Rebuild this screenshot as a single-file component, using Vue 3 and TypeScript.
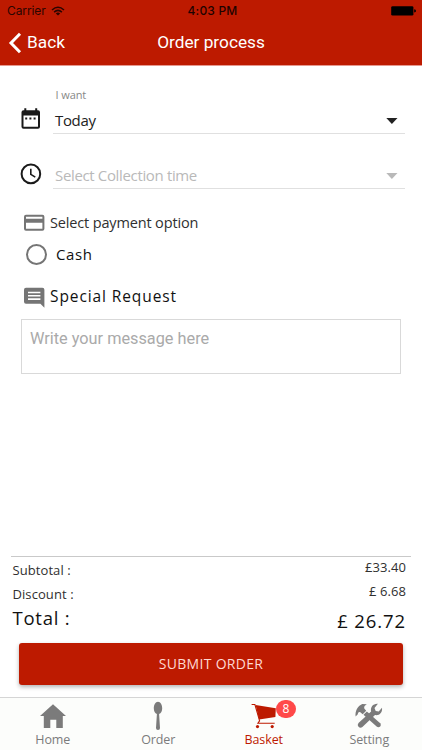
<script setup lang="ts">
import { ref } from 'vue'

interface Tab {
  id: string
  label: string
  badge?: number
}

interface Amount {
  id: string
  label: string
  value: string
}

const tabs: Tab[] = [
  { id: 'home', label: 'Home' },
  { id: 'order', label: 'Order' },
  { id: 'basket', label: 'Basket', badge: 8 },
  { id: 'setting', label: 'Setting' },
]

const amounts: Amount[] = [
  { id: 'subtotal', label: 'Subtotal :', value: '£33.40' },
  { id: 'discount', label: 'Discount :', value: '£ 6.68' },
  { id: 'total', label: 'Total :', value: '£ 26.72' },
]

const activeTab = ref('basket')
const cash = ref(false)
const message = ref('')
</script>

<template>
  <div class="screen">
    <header class="header">
      <div class="status">
        <div class="carrier">
          <span>Carrier</span>
          <svg class="wifi" width="14" height="10" viewBox="0 0 14 10">
            <g fill="none" stroke="#2b0500" stroke-width="1.5">
              <path d="M1 4Q7-1.4 13 4" />
              <path d="M3.1 6.1Q7 2.6 10.9 6.1" />
            </g>
            <path d="M4.8 7.4Q7 5.6 9.2 7.4L7 9.6z" fill="#2b0500" />
          </svg>
        </div>
        <span class="clock">4:03 PM</span>
        <svg class="battery" width="26" height="10" viewBox="0 0 26 10">
          <rect x="0.2" y="0.2" width="22.2" height="9.4" rx="1.4" />
          <path d="M23.2 3.2Q25 3.5 25 4.9T23.2 6.6z" />
        </svg>
      </div>
      <div class="navbar">
        <button class="back" type="button">
          <svg width="14" height="22" viewBox="0 0 14 22">
            <path d="M12 1.8L3 11l9 9.2" fill="none" stroke="#fff" stroke-width="3" />
          </svg>
          <span>Back</span>
        </button>
        <h1 class="title">Order process</h1>
      </div>
    </header>

    <main class="content">
      <section class="field">
        <svg class="field-icon" width="22" height="24" viewBox="0 0 22 24">
          <path
            fill="#1a1a1a"
            fill-rule="evenodd"
            d="M4.3 1.2h2v2h8.900v-2h2v2h.8q2 0 2 2v14.600q0 2-2 2H3.500q-2 0-2-2V5.200q0-2 2-2h.8zM3.500 8.500v11.300h14.500V8.500z"
          />
          <path fill="#1a1a1a" d="M5.200 10.500h2v2h-2zM9.400 10.500h2v2h-2zM13.600 10.500h2v2h-2z" />
        </svg>
        <div class="field-body">
          <span class="caption">I want</span>
          <div class="select">
            <span>Today</span>
            <svg class="caret" width="12" height="6" viewBox="0 0 12 6"><path d="M.3 0h11.200L5.900 6z" fill="currentColor" /></svg>
          </div>
        </div>
      </section>

      <section class="field second">
        <svg class="field-icon" width="22" height="24" viewBox="0 0 22 24">
          <circle cx="10.900" cy="11.900" r="9.300" fill="none" stroke="#1a1a1a" stroke-width="2" />
          <path d="M10.800 6.800v5.600l4.500 2.700" fill="none" stroke="#1a1a1a" stroke-width="1.600" />
        </svg>
        <div class="field-body">
          <div class="select empty">
            <span>Select Collection time</span>
            <svg class="caret" width="12" height="6" viewBox="0 0 12 6"><path d="M.3 0h11.200L5.900 6z" fill="currentColor" /></svg>
          </div>
        </div>
      </section>

      <h2 class="heading payment">
        <svg width="21" height="18" viewBox="0 0 21 18">
          <path
            fill="#757575"
            fill-rule="evenodd"
            d="M2 .7h16.400q2 0 2 2v12q0 2-2 2H2q-2 0-2-2v-12q0-2 2-2zM2 2.700v2h16.400v-2zM2 8.700v6h16.400v-6z"
          />
        </svg>
        <span>Select payment option</span>
      </h2>

      <label class="option">
        <input v-model="cash" class="native" type="checkbox" />
        <span class="radio" :class="{ checked: cash }"></span>
        <span>Cash</span>
      </label>

      <h2 class="heading request">
        <svg width="21" height="21" viewBox="0 0 21 21">
          <path
            fill="#757575"
            fill-rule="evenodd"
            d="M2 .7h16.400q2 0 2 2v18l-4-4H2q-2 0-2-2v-12q0-2 2-2zM4 4.700v1.600h12.400V4.700zM4 8v1.600h12.400V8zM4 11.200v1.700h12.400v-1.700z"
          />
        </svg>
        <span>Special Request</span>
      </h2>

      <textarea v-model="message" class="message" placeholder="Write your message here"></textarea>
    </main>

    <section class="summary">
      <div v-for="row in amounts" :key="row.id" class="amount" :class="row.id">
        <span class="amount-label">{{ row.label }}</span>
        <span class="amount-value">{{ row.value }}</span>
      </div>
    </section>

    <button class="submit" type="button"><span>SUBMIT ORDER</span></button>

    <nav class="tabs">
      <button
        v-for="tab in tabs"
        :key="tab.id"
        class="tab"
        :class="{ active: tab.id === activeTab }"
        type="button"
        @click="activeTab = tab.id"
      >
        <svg width="30" height="30" viewBox="0 0 30 30" fill="currentColor">
          <path v-if="tab.id === 'home'" d="M15 6.300L28 18h-3.200v12h-6.500v-8.200h-6V30H5.800V18H2z" />
          <template v-else-if="tab.id === 'order'">
            <path d="M15 3.800c2.600 0 4.200 3.200 4.200 6.400 0 2.900-1.200 5.100-3.100 5.800l.9 13.900q0 2-2 2t-2-2l.9-13.900c-1.900-.7-3.100-2.900-3.100-5.800 0-3.200 1.600-6.400 4.200-6.400z" />
          </template>
          <template v-else-if="tab.id === 'basket'">
            <path d="M6.600 7l20.200 3.200-.4 8.900L10.100 21.400z" />
            <path d="M2.600 6.500h3.300l4.700 16.400-1.700 2.400h16.800" fill="none" stroke="currentColor" stroke-width="1.100" />
            <circle cx="8.500" cy="28.600" r="1.600" />
            <circle cx="23.200" cy="28.600" r="1.600" />
          </template>
          <template v-else>
            <path d="M1.600 18.600C1 13.200 3.400 8.200 8.300 6.100l4.500.2c-2 1.200-3 2.400-2.500 4.100l1.900 2.400-3.500 3.500-2.400-2.100c-1.500-.4-2.300.3-2.500 2z" />
            <path d="M9.500 16.800l3.400-3.400L26.200 25.200q1.400 1.700 0 3.300-1.800 1.600-3.600 0z" />
            <path d="M23.900 5.800l-3.400 4.200 1.200 2.900 3 .7 3.300-3.900c.7 4.500-2.500 8.200-7 7.400L8.400 29q-2 1.600-3.900-.2-1.600-1.900 0-3.800l12.600-11.400c-1-4.500 2.200-8.300 6.800-7.800z" />
          </template>
        </svg>
        <span class="tab-label">{{ tab.label }}</span>
        <span v-if="tab.badge" class="badge">{{ tab.badge }}</span>
      </button>
    </nav>
  </div>
</template>

<style>
body {
  background: #fff;
}
</style>

<style scoped>
.screen,
.screen * {
  box-sizing: border-box;
}

.screen {
  display: flex;
  flex-direction: column;
  width: 422px;
  height: 750px;
  overflow: hidden;
  background: #fff;
  color: #303030;
  font-family: 'Open Sans', 'Noto Sans', sans-serif;
  white-space: nowrap;
}

button {
  margin: 0;
  padding: 0;
  border: 0;
  background: none;
  font: inherit;
  color: inherit;
}

svg {
  display: block;
  flex: none;
}

.header {
  height: 66px;
  flex: none;
  border-bottom: 1px solid #e6988e;
  background: #bd1a00;
}

.status {
  display: grid;
  grid-template-columns: 1fr auto 1fr;
  align-items: center;
  height: 22px;
  padding: 0 5px 0 7px;
  color: #2b0500;
  font: 12px/22px Inter, sans-serif;
}

.carrier {
  display: flex;
  align-items: center;
  gap: 5px;
  letter-spacing: -0.1px;
}

.wifi {
  margin-top: -1px;
}

.clock {
  padding-left: 1px;
  color: #1d0300;
  font-weight: 500;
  letter-spacing: 0.2px;
}

.battery {
  justify-self: end;
  fill: #000;
}

.navbar {
  display: grid;
  grid-template-columns: 1fr auto 1fr;
  align-items: center;
  height: 41px;
  color: #fff;
  font: 17.250px/41px Roboto, sans-serif;
}

.back {
  display: flex;
  align-items: center;
  gap: 5px;
  padding-left: 8px;
}

.title {
  margin: 0;
  font: inherit;
}

.content {
  flex: 1;
  padding: 20px 21px 0 20px;
}

.field {
  display: flex;
  align-items: flex-end;
  gap: 11px;
  margin-right: -4px;
}

.second {
  margin-top: 25px;
}

.field-icon {
  margin-bottom: 3px;
}

.field-body {
  flex: 1;
}

.caption {
  display: block;
  padding-left: 2.500px;
  color: #888;
  font-size: 11px;
  letter-spacing: -0.1px;
  line-height: 18px;
}

.select {
  display: flex;
  align-items: center;
  justify-content: space-between;
  height: 30px;
  padding: 4px 7px 0 2px;
  border-bottom: 1px solid #e0e0e0;
  color: #222;
  font-size: 15px;
  line-height: 25px;
  letter-spacing: -0.35px;
}

.caret {
  margin-top: 0;
}

.empty {
  color: #b9b9b9;
}

.heading {
  display: flex;
  align-items: center;
  gap: 5px;
  margin: 0;
  padding-left: 4px;
  font-weight: 400;
}

.payment {
  height: 24px;
  margin-top: 22px;
  font-size: 14.500px;
  line-height: 22px;
  letter-spacing: -0.15px;
}

.request span {
  margin-top: -2px;
}

.option {
  display: flex;
  align-items: center;
  gap: 9px;
  height: 24px;
  margin-top: 7px;
  padding-left: 6px;
  color: #111;
  font-size: 15px;
  line-height: 24px;
  letter-spacing: 0.6px;
}

.native {
  display: none;
}

.radio {
  width: 21px;
  height: 21px;
  border: 2px solid #757575;
  border-radius: 50%;
}

.checked {
  background: #bd1a00;
}

.request {
  height: 24px;
  margin-top: 19px;
  color: #111;
  font-size: 15.500px;
  line-height: 24px;
  letter-spacing: 0.9px;
}

.message {
  display: block;
  width: 380px;
  height: 55px;
  margin: 10px 0 0 1px;
  padding: 9px 8px 0;
  border: 1px solid #d9d9d9;
  border-radius: 0;
  outline: 0;
  background: #fff;
  color: #222;
  font: 16.300px/20px Roboto, sans-serif;
  resize: none;
}

.message::placeholder {
  color: #aaa;
  opacity: 1;
}

.summary {
  flex: none;
  height: 87px;
  margin: 0 11px;
  padding: 0 5px 0 1.500px;
  border-top: 1px solid #c9c9c9;
}

.amount {
  display: flex;
  justify-content: space-between;
  height: 24px;
  font-size: 13px;
  line-height: 26px;
  letter-spacing: 0.08px;
}

.amount-value {
  margin-top: -3px;
}

.total {
  color: #111;
  font-size: 18.500px;
  letter-spacing: 0.9px;
}

.total .amount-label {
  letter-spacing: 0.75px;
}

.total .amount-value {
  margin: 3px 0 0;
}

.submit {
  flex: none;
  height: 42px;
  margin: 0 19px 12px;
  border-radius: 3px;
  background: #bd1a00;
  box-shadow: 0 2px 4px rgba(0, 0, 0, 0.3);
  color: #ffd9d2;
  font-size: 14px;
  line-height: 42px;
  letter-spacing: 0.3px;
}

.tabs {
  display: grid;
  grid-template-columns: repeat(4, 1fr);
  flex: none;
  height: 53px;
  border-top: 1px solid #d5d5d5;
  background: #fcfdfb;
}

.tab {
  position: relative;
  display: flex;
  flex-direction: column;
  align-items: center;
  color: #7b7b7b;
}

.tab svg {
  overflow: visible;
}

.tab-label {
  font-size: 12.500px;
  line-height: 23px;
  letter-spacing: -0.1px;
}

.active {
  color: #bd1a00;
}

.badge {
  position: absolute;
  top: 2px;
  left: 65px;
  width: 20px;
  height: 18px;
  border-radius: 9px;
  background: #ff4949;
  color: #fff;
  font-size: 12px;
  line-height: 18px;
}
</style>
